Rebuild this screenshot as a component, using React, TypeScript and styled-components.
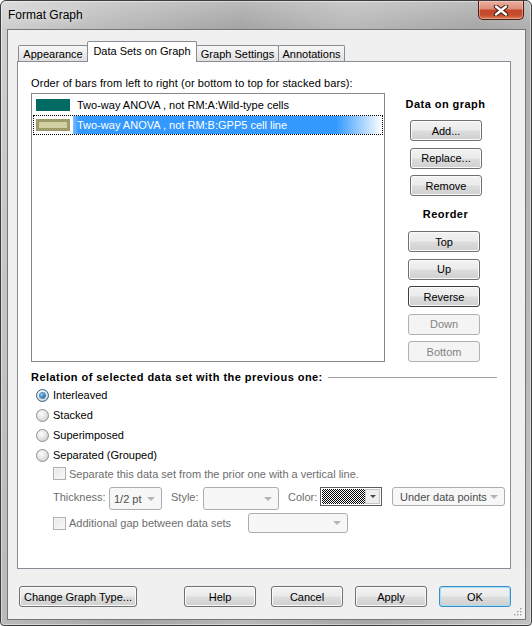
import React from "react";
import styled, { createGlobalStyle, css } from "styled-components";

const GlobalStyle = createGlobalStyle`
  html, body {
    margin: 0;
    padding: 0;
  }
  body {
    background: #ffffff;
    font-family: "Liberation Sans", Arial, sans-serif;
    font-size: 11px;
    color: #000;
  }
  #root {
    width: 532px;
    height: 626px;
  }
`;

/* window frame */

const Window = styled.div`
  box-sizing: border-box;
  width: 532px;
  height: 626px;
  display: flex;
  flex-direction: column;
  border: 1px solid #3d3d3d;
  border-radius: 6px 6px 4px 4px;
  background:
    linear-gradient(to bottom, rgba(255, 255, 255, 0.25), rgba(255, 255, 255, 0) 28px),
    linear-gradient(100deg, #d0d0d0 0%, #b9b9b9 18%, #a4a4a4 38%, #b8b8b8 55%, #a6a6a6 75%, #c2c2c2 100%);
  box-shadow: inset 0 0 0 1px rgba(255, 255, 255, 0.45);
`;

const TitleBar = styled.div`
  flex: none;
  height: 28px;
  display: flex;
  align-items: flex-start;
  justify-content: space-between;
  padding: 0 7px 0 7px;
`;

const Title = styled.span`
  font-size: 12px;
  line-height: 28px;
  color: #000;
  text-shadow: 0 0 7px rgba(255, 255, 255, 0.9);
`;

const CloseButton = styled.div`
  box-sizing: border-box;
  width: 46px;
  height: 19px;
  border: 1px solid #4a1f17;
  border-top: none;
  border-radius: 0 0 5px 5px;
  background: linear-gradient(#eab0a2 0%, #dc8f78 42%, #c5462a 52%, #c54e2e 78%, #d97a55 100%);
  box-shadow: inset 0 0 0 1px rgba(255, 215, 200, 0.45);
  display: flex;
  align-items: center;
  justify-content: center;
`;

const Client = styled.div`
  flex: 1;
  margin: 0 5px 5px 6px;
  border: 1px solid #767676;
  background: #f0f0f0;
  display: flex;
  flex-direction: column;
  padding: 11px 14px 0 9px;
  position: relative;
`;

const Grip = styled.svg`
  position: absolute;
  right: 2px;
  bottom: 2px;
`;

/* tabs */

const TabStrip = styled.div`
  height: 20px;
  display: flex;
  align-items: flex-end;
  padding-left: 1px;
`;

const Tab = styled.div<{ $w: number; $active?: boolean }>`
  box-sizing: border-box;
  width: ${(p) => p.$w}px;
  height: 16px;
  border: 1px solid #898c95;
  border-bottom: none;
  border-radius: 2px 2px 0 0;
  background: linear-gradient(#f7f7f7 0%, #ececec 50%, #e0e0e0 100%);
  display: flex;
  align-items: center;
  justify-content: center;
  white-space: nowrap;
  padding-top: 1px;
  & + & {
    margin-left: -1px;
  }
  ${(p) =>
    p.$active &&
    css`
      height: 21px;
      margin-bottom: -1px;
      background: #ffffff;
      position: relative;
      z-index: 1;
      padding-top: 0;
      padding-bottom: 2px;
    `}
`;

const Panel = styled.div`
  box-sizing: border-box;
  height: 508px;
  border: 1px solid #898c95;
  background: #ffffff;
  padding: 14px 4px 0 13px;
  display: flex;
  flex-direction: column;
`;

const Caption = styled.div`
  line-height: 14px;
  white-space: nowrap;
  letter-spacing: 0.08px;
`;

const TopArea = styled.div`
  display: flex;
  margin-top: 3px;
`;

/* list of data sets */

const ListBox = styled.div`
  box-sizing: border-box;
  width: 354px;
  height: 269px;
  border: 1px solid #828790;
  padding: 1px;
`;

const ListRow = styled.div<{ $focus?: boolean }>`
  box-sizing: border-box;
  height: 20px;
  display: flex;
  align-items: center;
  border: 1px solid transparent;
  ${(p) =>
    p.$focus &&
    css`
      border: 1px dotted #000;
    `}
`;

const Swatch = styled.span<{ $fill: string; $edge?: string }>`
  box-sizing: border-box;
  flex: none;
  width: 34px;
  height: 12px;
  margin-left: 2px;
  background: ${(p) => p.$fill};
  border: ${(p) => (p.$edge ? `3px solid ${p.$edge}` : "none")};
`;

const ItemText = styled.span<{ $selected?: boolean }>`
  white-space: nowrap;
  margin-left: 7px;
  ${(p) =>
    p.$selected &&
    css`
      margin-left: 3px;
      padding-left: 4px;
      flex: 1;
      align-self: stretch;
      display: flex;
      align-items: center;
      color: #ffffff;
      background: linear-gradient(
        to right,
        #7dbdff 0px,
        #3399ff 6px,
        #3399ff calc(100% - 46px),
        #ffffff 100%
      );
    `}
`;

/* side buttons */

const SideColumn = styled.div`
  flex: 1;
  display: flex;
  flex-direction: column;
  padding-top: 4px;
`;

const SideHeading = styled.div<{ $mt: number; $mb: number }>`
  font-weight: bold;
  letter-spacing: 0.45px;
  line-height: 14px;
  text-align: center;
  margin: ${(p) => p.$mt}px 0 ${(p) => p.$mb}px;
`;

const ButtonStack = styled.div<{ $x: number }>`
  display: flex;
  flex-direction: column;
  gap: 6.5px;
  margin-left: ${(p) => p.$x}px;
`;

const Button = styled.div<{ $w?: number; $disabled?: boolean; $default?: boolean; $focus?: boolean }>`
  box-sizing: border-box;
  width: ${(p) => p.$w ?? 72}px;
  height: 21px;
  flex: none;
  border: 1px solid #707070;
  border-radius: 3px;
  background: linear-gradient(#f2f2f2 0%, #ebebeb 48%, #dddddd 52%, #cfcfcf 100%);
  box-shadow: inset 0 0 0 1px #fbfbfb;
  display: flex;
  align-items: center;
  justify-content: center;
  white-space: nowrap;
  color: #000;
  ${(p) =>
    p.$focus &&
    css`
      border-color: #3e3e3e;
    `}
  ${(p) =>
    p.$default &&
    css`
      border-color: #3c8dc8;
      box-shadow: inset 0 0 0 1px #9ee0f8;
    `}
  ${(p) =>
    p.$disabled &&
    css`
      border-color: #adb2b5;
      background: #f4f4f4;
      box-shadow: none;
      color: #838383;
    `}
`;

/* relation section */

const SectionHead = styled.div`
  display: flex;
  align-items: center;
  height: 14px;
  margin-top: 8px;
  margin-right: 9px;
  font-weight: bold;
  letter-spacing: 0.45px;
  white-space: nowrap;
`;

const Rule = styled.span`
  flex: 1;
  height: 1px;
  margin-left: 5px;
  background: #a0a0a0;
`;

const RadioList = styled.div`
  margin-left: 5px;
  margin-top: 1px;
`;

const RadioRow = styled.div`
  height: 20px;
  display: flex;
  align-items: center;
  gap: 4px;
`;

const RadioDot = styled.span<{ $checked?: boolean }>`
  box-sizing: border-box;
  width: 13px;
  height: 13px;
  border-radius: 50%;
  border: 1px solid ${(p) => (p.$checked ? "#2c628b" : "#8e8f8f")};
  background: radial-gradient(circle at 40% 35%, #ffffff 0%, #e6e6e6 45%, #c3c3c3 100%);
  display: flex;
  align-items: center;
  justify-content: center;
  ${(p) =>
    p.$checked &&
    css`
      &::after {
        content: "";
        width: 5px;
        height: 5px;
        border-radius: 50%;
        background: radial-gradient(circle at 35% 35%, #9ad6ff 0%, #2a82d0 50%, #0d4f92 100%);
        box-shadow: 0 0 0 1px #5a8fb8;
      }
    `}
`;

const Options = styled.div`
  margin-left: 22px;
`;

const CheckRow = styled.div<{ $h: number; $mt: number }>`
  height: ${(p) => p.$h}px;
  margin-top: ${(p) => p.$mt}px;
  display: flex;
  align-items: center;
  color: #6d6d6d;
  white-space: nowrap;
`;

const CheckBox = styled.span`
  box-sizing: border-box;
  flex: none;
  width: 13px;
  height: 13px;
  margin-right: 3px;
  border: 1px solid #b1b1b1;
  background: linear-gradient(135deg, #e6e6e6, #fafafa);
  box-shadow: inset 0 0 0 1px #f4f4f4;
`;

const CheckLabel = styled.span<{ $w?: number }>`
  ${(p) => p.$w && `width: ${p.$w}px;`}
`;

const FieldRow = styled.div`
  display: flex;
  align-items: flex-start;
  margin-top: 5px;
  height: 23px;
`;

const FieldLabel = styled.span<{ $w: number; $ml?: number }>`
  width: ${(p) => p.$w}px;
  margin-left: ${(p) => p.$ml ?? 0}px;
  line-height: 21px;
  color: #6d6d6d;
  white-space: nowrap;
`;

const Combo = styled.div<{ $w: number; $h: number; $ml?: number; $pad?: number }>`
  box-sizing: border-box;
  flex: none;
  width: ${(p) => p.$w}px;
  height: ${(p) => p.$h}px;
  margin-left: ${(p) => p.$ml ?? 0}px;
  border: 1px solid #abadb3;
  border-radius: 3px;
  background: #f7f7f7;
  display: flex;
  align-items: center;
  padding-left: ${(p) => p.$pad ?? 4}px;
  color: #4d4d4d;
  white-space: nowrap;
  &::after {
    content: "";
    margin-left: auto;
    margin-right: 6px;
    border-left: 4px solid transparent;
    border-right: 4px solid transparent;
    border-top: 4px solid #b4b4b4;
  }
`;

const ColorBox = styled.div`
  box-sizing: border-box;
  flex: none;
  width: 62px;
  height: 19px;
  border: 1px solid #5c5c5c;
  background: #ffffff;
  padding: 1px;
  display: flex;
`;

const Pattern = styled.div`
  flex: 1;
  background-color: #ffffff;
  background-image: repeating-conic-gradient(#000 0 25%, #fff 0 50%);
  background-size: 2px 2px;
`;

const ColorDrop = styled.div`
  box-sizing: border-box;
  width: 15px;
  border: 1px solid #c4c4c4;
  background: #ededed;
  display: flex;
  align-items: center;
  justify-content: center;
  &::after {
    content: "";
    border-left: 3px solid transparent;
    border-right: 3px solid transparent;
    border-top: 3px solid #444;
  }
`;

/* bottom */

const Footer = styled.div`
  display: flex;
  margin-top: 17px;
  padding-left: 2px;
`;

const FooterRight = styled.div`
  display: flex;
  margin-left: auto;
  gap: 12px;
  & > :first-child {
    margin-right: 3px;
  }
`;

const CloseIcon = () => (
  <svg width="16" height="11" viewBox="0 0 16 11">
    <path d="M3 1.5 L13 9.5 M13 1.5 L3 9.5" stroke="#3b1810" strokeWidth="4.4" strokeLinecap="round" />
    <path d="M3 1.5 L13 9.5 M13 1.5 L3 9.5" stroke="#ffffff" strokeWidth="2.4" strokeLinecap="round" />
  </svg>
);

const gripDots = [
  [8, 2],
  [8, 5],
  [5, 5],
  [8, 8],
  [5, 8],
  [2, 8],
];

const GripIcon = () => (
  <Grip width="10" height="10" viewBox="0 0 10 10">
    {gripDots.map(([x, y]) => (
      <g key={`${x}-${y}`}>
        <rect x={x} y={y} width="1.5" height="1.5" fill="#ffffff" />
        <rect x={x - 1} y={y - 1} width="1.5" height="1.5" fill="#a0a0a0" />
      </g>
    ))}
  </Grip>
);

const radios = ["Interleaved", "Stacked", "Superimposed", "Separated (Grouped)"];

export default function App() {
  return (
    <>
      <GlobalStyle />
      <Window>
        <TitleBar>
          <Title>Format Graph</Title>
          <CloseButton>
            <CloseIcon />
          </CloseButton>
        </TitleBar>
        <Client>
          <TabStrip>
            <Tab $w={70}>Appearance</Tab>
            <Tab $w={110} $active>
              Data Sets on Graph
            </Tab>
            <Tab $w={83}>Graph Settings</Tab>
            <Tab $w={67}>Annotations</Tab>
          </TabStrip>
          <Panel>
            <Caption>Order of bars from left to right (or bottom to top for stacked bars):</Caption>
            <TopArea>
              <ListBox>
                <ListRow>
                  <Swatch $fill="#006a63" />
                  <ItemText>Two-way ANOVA , not RM:A:Wild-type cells</ItemText>
                </ListRow>
                <ListRow $focus>
                  <Swatch $fill="#d1d0a4" $edge="#9f9b6b" />
                  <ItemText $selected>Two-way ANOVA , not RM:B:GPP5 cell line</ItemText>
                </ListRow>
              </ListBox>
              <SideColumn>
                <SideHeading $mt={0} $mb={9}>
                  Data on graph
                </SideHeading>
                <ButtonStack $x={25}>
                  <Button>Add...</Button>
                  <Button>Replace...</Button>
                  <Button>Remove</Button>
                </ButtonStack>
                <SideHeading $mt={11} $mb={10}>
                  Reorder
                </SideHeading>
                <ButtonStack $x={23}>
                  <Button>Top</Button>
                  <Button>Up</Button>
                  <Button $focus>Reverse</Button>
                  <Button $disabled>Down</Button>
                  <Button $disabled>Bottom</Button>
                </ButtonStack>
              </SideColumn>
            </TopArea>
            <SectionHead>
              Relation of selected data set with the previous one:
              <Rule />
            </SectionHead>
            <RadioList>
              {radios.map((label, i) => (
                <RadioRow key={label}>
                  <RadioDot $checked={i === 0} />
                  {label}
                </RadioRow>
              ))}
            </RadioList>
            <Options>
              <CheckRow $h={17} $mt={0}>
                <CheckBox />
                <CheckLabel>Separate this data set from the prior one with a vertical line.</CheckLabel>
              </CheckRow>
              <FieldRow>
                <FieldLabel $w={56}>Thickness:</FieldLabel>
                <Combo $w={53} $h={23}>
                  1/2 pt
                </Combo>
                <FieldLabel $w={32} $ml={9}>
                  Style:
                </FieldLabel>
                <Combo $w={76} $h={23} />
                <FieldLabel $w={32} $ml={9}>
                  Color:
                </FieldLabel>
                <ColorBox>
                  <Pattern />
                  <ColorDrop />
                </ColorBox>
                <Combo $w={113} $h={19} $ml={10} $pad={7}>
                  Under data points
                </Combo>
              </FieldRow>
              <CheckRow $h={20} $mt={3}>
                <CheckBox />
                <CheckLabel $w={179}>Additional gap between data sets</CheckLabel>
                <Combo $w={100} $h={20} />
              </CheckRow>
            </Options>
          </Panel>
          <Footer>
            <Button $w={118}>Change Graph Type...</Button>
            <FooterRight>
              <Button>Help</Button>
              <Button>Cancel</Button>
              <Button>Apply</Button>
              <Button $default>OK</Button>
            </FooterRight>
          </Footer>
          <GripIcon />
        </Client>
      </Window>
    </>
  );
}
